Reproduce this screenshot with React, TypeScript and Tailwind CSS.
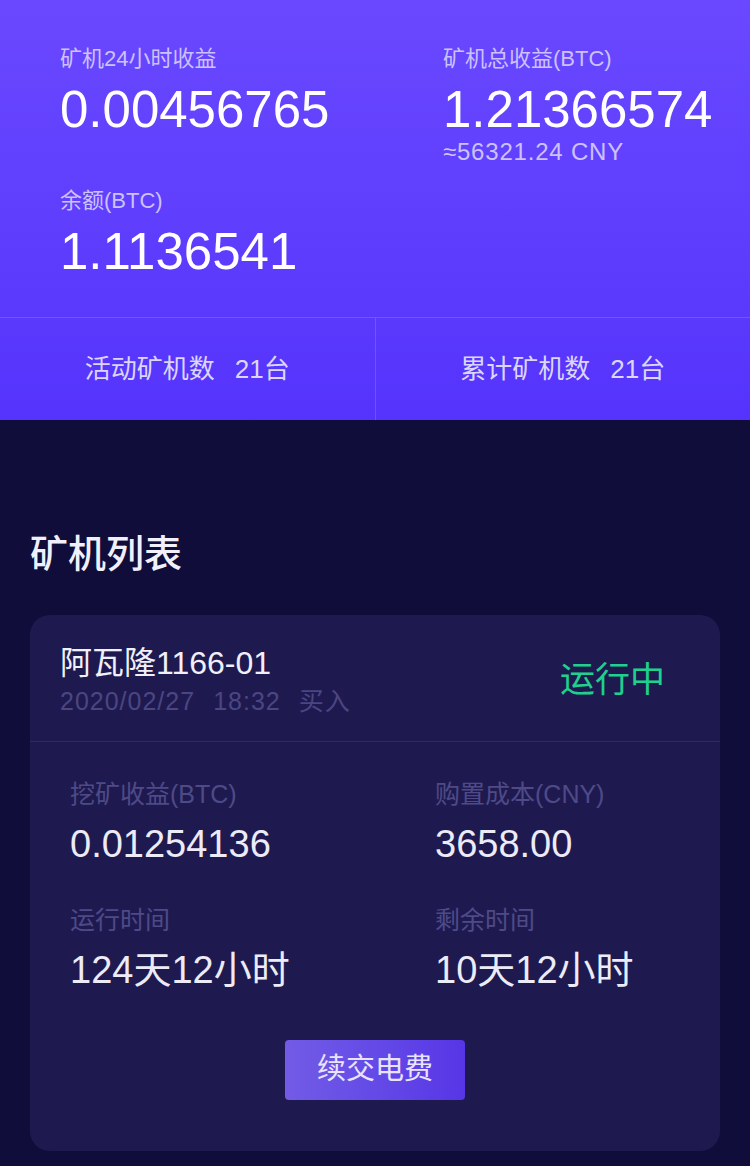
import React from 'react';

const FONT = "font-['Liberation_Sans','Noto_Sans_CJK_SC',sans-serif]";

// --- Bloc statistique de l'en-tête ---
const HeaderStat = ({ label, value, sub }: { label: string; value: string; sub?: string }) => (
  <div className="flex flex-col">
    <div className="text-[22px] leading-[28px] text-[#cbc2ff]">{label}</div>
    <div className="mt-[9px] text-[51px] leading-[56px] text-white">{value}</div>
    {sub && <div className="text-[24px] leading-[28px] tracking-[0.8px] text-[#cbc2ff]">{sub}</div>}
  </div>
);

// --- Cellule de compteur ---
const CountCell = ({ label, value, border }: { label: string; value: string; border?: boolean }) => (
  <div
    className={
      border
        ? 'flex flex-1 items-center justify-center gap-[20px] border-r border-white/15 text-[26px] text-[#dcd6ff]'
        : 'flex flex-1 items-center justify-center gap-[20px] text-[26px] text-[#dcd6ff]'
    }
  >
    <span>{label}</span>
    <span>{value}</span>
  </div>
);

// --- Champ de la carte ---
const CardField = ({ label, value }: { label: string; value: string }) => (
  <div className="flex flex-col">
    <div className="text-[25px] leading-[32px] text-[#4f4a87]">{label}</div>
    <div className="mt-[12px] text-[38px] leading-[44px] text-[#ecebf7]">{value}</div>
  </div>
);

export default function App() {
  return (
    <div className={`${FONT} min-h-[1166px] w-[750px] bg-[#100d3b]`}>
      {/* En-tête violet */}
      <div className="bg-linear-to-b from-[#6a48ff] to-[#5533fc]">
        <div className="px-[60px] pt-[45px] pb-[37px]">
          <div className="grid grid-cols-[383px_1fr]">
            <HeaderStat label="矿机24小时收益" value="0.00456765" />
            <HeaderStat label="矿机总收益(BTC)" value="1.21366574" sub="≈56321.24 CNY" />
          </div>
          <div className="mt-[21px]">
            <HeaderStat label="余额(BTC)" value="1.1136541" />
          </div>
        </div>
        <div className="flex h-[103px] border-t border-white/15">
          <CountCell label="活动矿机数" value="21台" border />
          <CountCell label="累计矿机数" value="21台" />
        </div>
      </div>

      {/* Liste des machines */}
      <div className="px-[30px] pt-[112px] pb-[16px]">
        <h2 className="text-[38px] leading-[44px] font-medium text-[#f1f0fa]">矿机列表</h2>

        <div className="mt-[39px] rounded-[20px] bg-[#1e1a50]">
          <div className="flex items-center justify-between border-b border-[#2e2a68] pt-[30px] pb-[26px] pl-[30px] pr-[55px]">
            <div className="flex flex-col">
              <div className="text-[32px] leading-[37px] text-[#f1f0fa]">阿瓦隆1166-01</div>
              <div className="mt-[5px] flex gap-[18px] text-[25px] leading-[28px] tracking-[1px] text-[#4b4682]">
                <span>2020/02/27</span>
                <span>18:32</span>
                <span>买入</span>
              </div>
            </div>
            <div className="text-[35px] leading-[40px] text-[#1fd08e]">运行中</div>
          </div>

          <div className="px-[40px] pt-[36px] pb-[51px]">
            <div className="grid grid-cols-[365px_1fr] gap-y-[38px]">
              <CardField label="挖矿收益(BTC)" value="0.01254136" />
              <CardField label="购置成本(CNY)" value="3658.00" />
              <CardField label="运行时间" value="124天12小时" />
              <CardField label="剩余时间" value="10天12小时" />
            </div>
            <div className="mt-[48px] flex justify-center">
              <button className="h-[60px] w-[180px] rounded-[4px] bg-linear-to-r from-[#735be6] to-[#5735e6] text-[29px] text-[#e8e4ff]">
                续交电费
              </button>
            </div>
          </div>
        </div>
      </div>
    </div>
  );
}
